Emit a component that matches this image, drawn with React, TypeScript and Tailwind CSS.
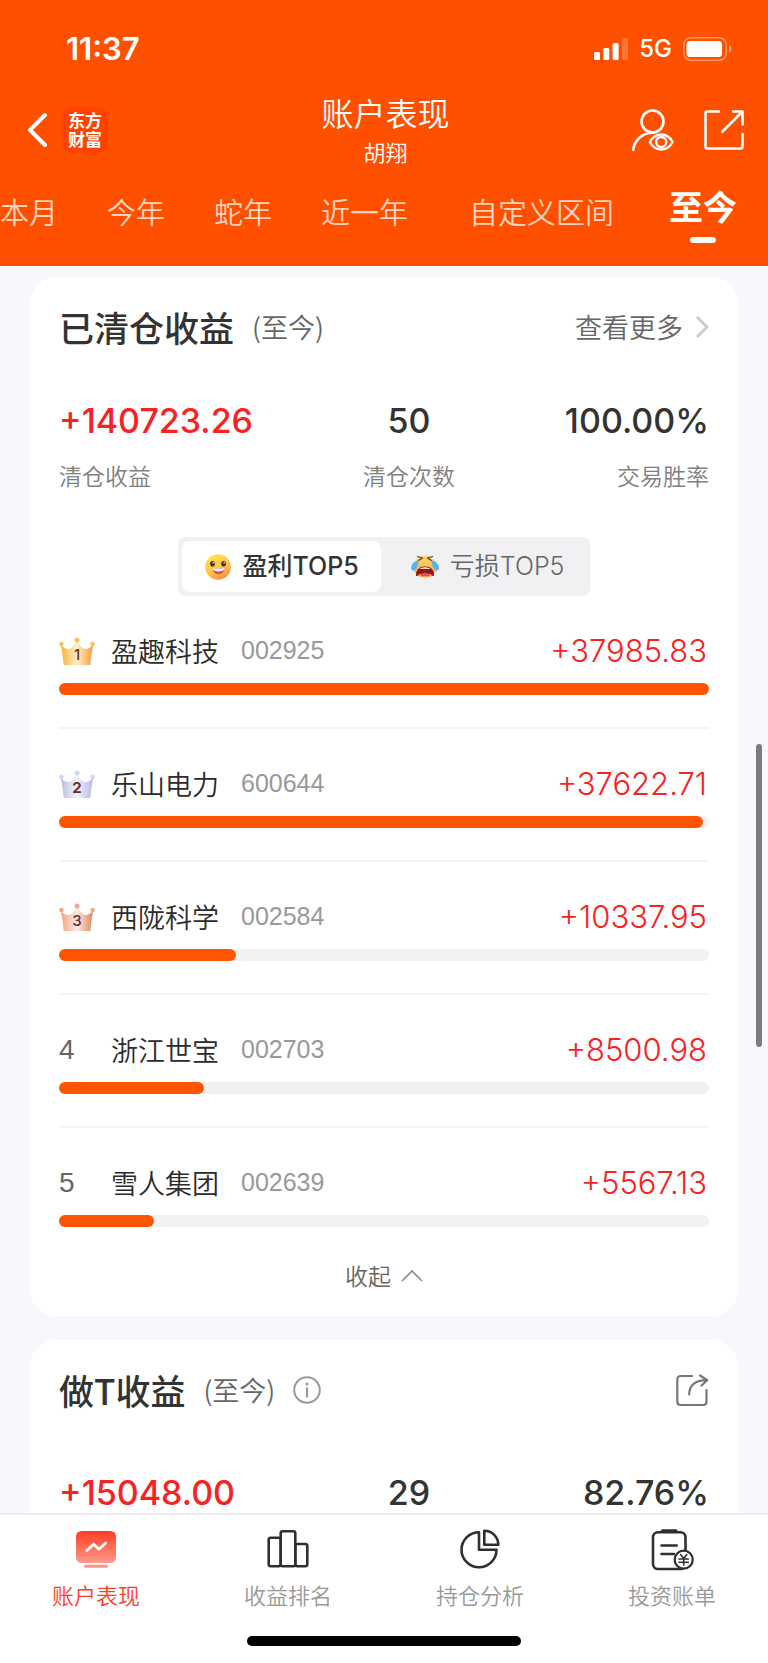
import { useState } from "react";

interface Stock {
  name: string;
  code: string;
  amount: number;
}

const stocks: Stock[] = [
  { name: "盈趣科技", code: "002925", amount: 37985.83 },
  { name: "乐山电力", code: "600644", amount: 37622.71 },
  { name: "西陇科学", code: "002584", amount: 10337.95 },
  { name: "浙江世宝", code: "002703", amount: 8500.98 },
  { name: "雪人集团", code: "002639", amount: 5567.13 },
];

const crowns = [
  { id: "gold", edge: "#f7b035", mid: "#fff0c4", end: "#f39a3c", ball: "#f8c552", weight: 500 },
  { id: "silver", edge: "#b9bde0", mid: "#f3f4fd", end: "#b4b6ea", ball: "#d3d6f5", weight: 700 },
  { id: "bronze", edge: "#f3a283", mid: "#fdeae0", end: "#e2825f", ball: "#f3a88c", weight: 500 },
];

function Crown({ rank }: { rank: number }) {
  const c = crowns[rank - 1];
  return (
    <svg width="36" height="30" viewBox="0 0 36 30" role="img" aria-label={`第${rank}名`}>
      <defs>
        <linearGradient id={c.id} x1="0" x2="1" y1="0" y2="0">
          <stop offset="0" stopColor={c.edge} />
          <stop offset="0.5" stopColor={c.mid} />
          <stop offset="1" stopColor={c.end} />
        </linearGradient>
      </defs>
      <path d="M1.8 9 Q7.500 14.500 11.500 12.500 Q15.500 10 18 4 Q20.500 10 24.500 12.500 Q28.500 14.500 34.200 9 Q32 19 31.300 29 H4.700 Q4 19 1.800 9 Z" fill={`url(#${c.id})`} />
      <circle cx="2.400" cy="8" r="2.300" fill={c.ball} />
      <circle cx="18" cy="4" r="2.500" fill={c.ball} />
      <circle cx="33.600" cy="8" r="2.300" fill={c.ball} />
      <text x="18" y="24" textAnchor="middle" fontFamily="Inter" fontSize="15" fontWeight={c.weight} fill="#6b2c1c">{rank}</text>
    </svg>
  );
}

function HappyFace() {
  return (
    <svg width="28" height="28" viewBox="0 0 28 28" aria-hidden="true">
      <defs>
        <linearGradient id="happy" x1="0.2" x2="0.7" y1="0" y2="1">
          <stop offset="0" stopColor="#ffe64d" />
          <stop offset="0.6" stopColor="#ffc24a" />
          <stop offset="1" stopColor="#f98a4b" />
        </linearGradient>
      </defs>
      <circle cx="14" cy="14" r="12.800" fill="url(#happy)" />
      <ellipse cx="8.500" cy="10.800" rx="2.300" ry="2.800" fill="#4a2a2c" />
      <ellipse cx="19.600" cy="10.800" rx="2.300" ry="2.800" fill="#4a2a2c" />
      <circle cx="9.200" cy="9.800" r="0.800" fill="#fff" />
      <circle cx="20.200" cy="9.800" r="0.800" fill="#fff" />
      <path d="M8.500 15 Q14.500 16.200 20.500 15 Q20 21 14.500 21 Q9 21 8.500 15 Z" fill="#e2453c" />
      <path d="M8.500 15 Q14.500 16.200 20.500 15 Q20.300 18.500 14.500 18.500 Q8.800 18.500 8.500 15 Z" fill="#fff" />
    </svg>
  );
}

function CryingFace() {
  return (
    <svg width="28" height="28" viewBox="0 0 28 28" aria-hidden="true">
      <defs>
        <linearGradient id="crying" x1="0" x2="0" y1="0" y2="1">
          <stop offset="0" stopColor="#ffd873" />
          <stop offset="1" stopColor="#f6a53c" />
        </linearGradient>
      </defs>
      <path d="M14 2.500 C21 2.500 25 8 25 14.500 C25 21.500 20 24.500 14 24.500 C8 24.500 3 21.500 3 14.500 C3 8 7 2.500 14 2.500 Z" fill="url(#crying)" />
      <path d="M6.500 3.500 L11.500 5 L7.500 7.500 M21.500 3.500 L16.500 5 L20.500 7.500" fill="none" stroke="#5b4136" strokeWidth="1.300" strokeLinecap="round" strokeLinejoin="round" />
      <path d="M5 23 Q4.500 13.500 14 13.500 Q23.500 13.500 23 23 Q21 23.500 19.500 21 H8.500 Q7 23.500 5 23 Z" fill="#8e1420" />
      <path d="M8 16 Q14 12.500 20 16 Q14 15.500 8 16 Z" fill="#fff" />
      <path d="M8.500 22.500 Q14 16.500 19.500 22.500 Q14 24 8.500 22.500 Z" fill="#ee4a4a" />
      <path d="M7.500 7.500 Q7 14 4 17 Q1 19 0 15 Q1 8 7.500 7.500 Z" fill="#4fb4f7" />
      <path d="M20.500 7.500 Q21 14 24 17 Q27 19 28 15 Q27 8 20.500 7.500 Z" fill="#4fb4f7" />
    </svg>
  );
}

function StatusBar() {
  return (
    <div className="flex h-[94px] items-center justify-between pt-1 pr-9 pl-[66px] font-['Inter']">
      <span className="text-[31px] font-semibold">11:37</span>
      <div className="flex items-center gap-[11px]">
        <svg width="34" height="23" viewBox="0 0 34 23" fill="#fff" aria-hidden="true">
          <rect x="0" y="14" width="6" height="8" rx="1.500" />
          <rect x="9.300" y="10" width="6" height="12" rx="1.500" />
          <rect x="18.600" y="5" width="6" height="17" rx="1.500" />
          <rect x="28" y="0" width="6" height="22" rx="1.500" opacity="0.200" />
        </svg>
        <span className="text-[24px] font-medium">5G</span>
        <svg width="49" height="24" viewBox="0 0 49 24" aria-hidden="true">
          <rect x="0.800" y="0.800" width="42.500" height="22.400" rx="7" fill="none" stroke="#fff" strokeOpacity="0.400" strokeWidth="1.600" />
          <rect x="3.500" y="4" width="35.500" height="16" rx="3.500" fill="#fff" />
          <path d="M46 8 Q48.700 9.500 48.700 12 Q48.700 14.500 46 16 Z" fill="#fff" fillOpacity="0.450" />
        </svg>
      </div>
    </div>
  );
}

function TitleBar() {
  return (
    <div className="flex h-[72px] items-center pr-6 pl-[27px]">
      <div className="flex flex-1 items-center gap-[15px]">
        <button aria-label="返回">
          <svg width="20" height="36" viewBox="0 0 20 36" fill="none" stroke="#fff" strokeWidth="4" strokeLinecap="round" strokeLinejoin="round">
            <path d="M18 3 L3 18 L18 33" />
          </svg>
        </button>
        <span className="size-[46px] rounded-[10px] bg-[#ff4200] px-1.5 py-[3px] text-[17px] leading-[19px] font-bold">东方财富</span>
      </div>
      <div className="flex flex-col items-center gap-[7px] pb-1">
        <h1 className="text-[32px] leading-[38px] font-[350]">账户表现</h1>
        <span className="text-[22px] leading-[26px] font-[350]">胡翔</span>
      </div>
      <div className="flex flex-1 items-center justify-end gap-[29px]">
        <button aria-label="查看账户">
          <svg width="44" height="44" viewBox="0 0 44 44" fill="none" stroke="#fff" strokeWidth="2.600" strokeLinecap="round">
            <circle cx="21.500" cy="13.500" r="11" />
            <path d="M2.200 42 C3.500 32 11 25 21.500 24.700" />
            <path d="M18.800 34 Q23 26.500 30.200 26.500 Q37.500 26.500 41.600 34 Q37.500 41.500 30.200 41.500 Q23 41.500 18.800 34 Z" strokeWidth="2.400" />
            <circle cx="30.200" cy="34" r="5" strokeWidth="2.400" />
          </svg>
        </button>
        <button aria-label="分享">
          <svg width="40" height="40" viewBox="0 0 40 40" fill="none" stroke="#fff" strokeWidth="2.600" strokeLinejoin="round">
            <path d="M16 1.500 H3.500 Q1.500 1.500 1.500 3.500 V36.500 Q1.500 38.500 3.500 38.500 H36.500 Q38.500 38.500 38.500 36.500 V23" />
            <path d="M28 1.500 H38.500 V15.500 M38 2 L17.500 22.500" />
          </svg>
        </button>
      </div>
    </div>
  );
}

function PeriodTabs() {
  return (
    <div className="flex h-[100px] items-start gap-[49px] overflow-hidden pt-5 text-[29px] leading-[50px] font-[350] whitespace-nowrap text-white/75">
      <button>本月</button>
      <button>今年</button>
      <button>蛇年</button>
      <button>近一年</button>
      <button className="ml-3">自定义区间</button>
      <button aria-current="true" className="ml-1.5 flex flex-col items-center gap-[11px] text-[34px] leading-10 font-bold text-white">
        至今
        <span className="h-1.5 w-[26px] rounded-full bg-white" />
      </button>
    </div>
  );
}

function Stat({ value, label, align, red }: { value: string; label?: string; align: string; red?: boolean }) {
  return (
    <div className={`flex flex-col gap-5 ${align}`}>
      <span className={`font-['Inter'] text-[34px] leading-10 font-medium ${red ? "text-[#f72323]" : "text-[#333]"}`}>{value}</span>
      {label && <span className="text-[23px] leading-7 font-[350] text-[#808080]">{label}</span>}
    </div>
  );
}

function StockRow({ stock, rank }: { stock: Stock; rank: number }) {
  return (
    <li className="border-b-2 border-[#f4f4f6] pt-[35px] pb-8 last:border-b-0 last:pb-0">
      <div className="flex h-10 items-center">
        <span className="w-[52px] font-['Liberation_Sans'] text-[28px] text-[#666]">{rank <= 3 ? <Crown rank={rank} /> : rank}</span>
        <span className="text-[27px] leading-10 font-[350] text-[#2b2b2b]">{stock.name}</span>
        <span className="ml-[22px] font-['Liberation_Sans'] text-[25px] text-[#999]">{stock.code}</span>
        <span className="ml-auto pr-0.5 font-['Inter'] text-[31px] font-light text-[#f72323]">+{stock.amount.toFixed(2)}</span>
      </div>
      <div className="mt-3 h-3 rounded-full bg-[#f1f1f4]">
        <div className="h-full rounded-full bg-[#ff5500]" style={{ width: `${(stock.amount / stocks[0].amount) * 100}%` }} />
      </div>
    </li>
  );
}

function ClearedCard() {
  const [tab, setTab] = useState("profit");
  return (
    <section className="rounded-[26px] bg-white px-[29px] pt-[30px] pb-6">
      <div className="flex h-10 items-center">
        <h2 className="text-[35px] font-medium text-[#333]">已清仓收益</h2>
        <span className="ml-[18px] text-[27px] font-[350] text-[#666]">(至今)</span>
        <a href="#more" className="ml-auto flex items-center gap-3 text-[27px] font-[350] text-[#666]">
          查看更多
          <svg width="14" height="24" viewBox="0 0 14 24" fill="none" stroke="#ccc" strokeWidth="3" aria-hidden="true">
            <path d="M2 2 L12 12 L2 22" />
          </svg>
        </a>
      </div>
      <div className="mt-[54px] flex justify-between">
        <Stat value="+140723.26" label="清仓收益" align="items-start" red />
        <Stat value="50" label="清仓次数" align="items-center" />
        <Stat value="100.00%" label="交易胜率" align="items-end" />
      </div>
      <div className="mt-12 flex justify-center">
        <div className="flex h-[59px] gap-2 rounded-lg bg-[#f1f1f4] p-1 font-['Inter','Noto_Sans_CJK_SC',sans-serif] text-[25px]">
          <button onClick={() => setTab("profit")} className={`flex items-center gap-[11px] rounded-lg px-[22px] ${tab === "profit" ? "bg-white font-medium text-[#333]" : "font-[350] text-[#666]"}`}>
            <HappyFace />盈利TOP5
          </button>
          <button onClick={() => setTab("loss")} className={`flex items-center gap-[11px] rounded-lg px-[22px] ${tab === "loss" ? "bg-white font-medium text-[#333]" : "font-[350] text-[#666]"}`}>
            <CryingFace />亏损TOP5
          </button>
        </div>
      </div>
      <ul>
        {stocks.map((s, i) => <StockRow key={s.code} stock={s} rank={i + 1} />)}
      </ul>
      <button className="mx-auto mt-[31px] flex h-[34px] items-center gap-2.5 text-[23px] font-[350] text-[#666]">
        收起
        <svg width="22" height="13" viewBox="0 0 22 13" fill="none" stroke="#888" strokeWidth="1.600" aria-hidden="true">
          <path d="M1 12 L11 2 L21 12" />
        </svg>
      </button>
    </section>
  );
}

function DayTradeCard() {
  return (
    <section className="rounded-[26px] bg-white px-[29px] pt-[30px] pb-6">
      <div className="flex h-10 items-center">
        <h2 className="text-[35px] font-medium text-[#333]">做T收益</h2>
        <span className="ml-[18px] text-[27px] font-[350] text-[#666]">(至今)</span>
        <button aria-label="说明" className="ml-[18px]">
          <svg width="28" height="28" viewBox="0 0 28 28" fill="none" stroke="#999" strokeWidth="2">
            <circle cx="14" cy="14" r="12.800" />
            <path d="M14 11.500 V21.500" strokeWidth="2.200" />
            <circle cx="14" cy="8" r="1.500" fill="#999" stroke="none" />
          </svg>
        </button>
        <button aria-label="分享" className="ml-auto">
          <svg width="34" height="34" viewBox="0 0 34 34" fill="none" stroke="#777" strokeWidth="2.200" strokeLinecap="round" strokeLinejoin="round">
            <path d="M17 3 H6 Q2.300 3 2.300 6.500 V28.500 Q2.300 32 6 32 H28 Q31.500 32 31.500 28.500 V17" />
            <path d="M14.200 21.500 C14.200 12 20 7.200 32 7.200 M25 2.500 L32.200 7.200 L26.500 12.500" />
          </svg>
        </button>
      </div>
      <div className="mt-[63px] flex justify-between">
        <Stat value="+15048.00" align="items-start" red />
        <Stat value="29" align="items-center" />
        <Stat value="82.76%" align="items-end" />
      </div>
    </section>
  );
}

const navItems = [
  {
    label: "账户表现",
    icon: (
      <>
        <defs>
          <linearGradient id="screen" x1="0" x2="0" y1="0" y2="1">
            <stop offset="0" stopColor="#ff3d22" />
            <stop offset="1" stopColor="#ff9b8c" />
          </linearGradient>
        </defs>
        <rect x="2" y="3" width="40" height="32" rx="5.500" fill="url(#screen)" stroke="none" />
        <path d="M13 22.500 L19.700 16.200 L25 21.300 L31.500 15.300" stroke="#fff" strokeWidth="2.800" />
        <rect x="10" y="36.700" width="24" height="3" rx="1.500" fill="#ff9384" stroke="none" />
      </>
    ),
  },
  {
    label: "收益排名",
    icon: (
      <>
        <rect x="2.700" y="9.700" width="12" height="28.600" rx="2" />
        <rect x="14.700" y="3.200" width="14.600" height="35.100" rx="2" />
        <rect x="29.300" y="16" width="12" height="22.300" rx="2" />
      </>
    ),
  },
  {
    label: "持仓分析",
    icon: (
      <>
        <path d="M21 4.200 A17.500 17.500 0 1 0 38.500 21.700 H21 Z" />
        <path d="M26.300 2.800 A14 14 0 0 1 40.300 16.800 H26.300 Z" />
      </>
    ),
  },
  {
    label: "投资账单",
    icon: (
      <>
        <rect x="3" y="4.200" width="32.500" height="36.800" rx="5" />
        <path d="M12.500 2.900 H26" strokeWidth="3.200" />
        <path d="M11.500 17.500 H26.700 M11.500 26 H24" />
        <circle cx="33.700" cy="31.700" r="9" fill="#fff" strokeWidth="2.200" />
        <path d="M30.700 26.700 L33.700 30.500 L36.700 26.700 M29 31 H38.400 M29 34.200 H38.400 M33.700 30.500 V37" strokeWidth="1.600" />
      </>
    ),
  },
];

function BottomNav() {
  return (
    <nav className="border-t-2 border-[#eee] bg-white pt-[13px] pb-[17px]">
      <div className="grid grid-cols-4">
        {navItems.map((item, i) => (
          <button key={item.label} className={`flex flex-col items-center gap-2 text-[22px] leading-7 font-[350] ${i === 0 ? "text-[#ff3d22]" : "text-[#999]"}`}>
            <svg width="44" height="44" viewBox="0 0 44 44" fill="none" stroke="#2f2f2f" strokeWidth="2.600" strokeLinecap="round" strokeLinejoin="round" aria-hidden="true">
              {item.icon}
            </svg>
            {item.label}
          </button>
        ))}
      </div>
      <div className="mx-auto mt-7 h-2.5 w-[274px] rounded-full bg-black" />
    </nav>
  );
}

export default function App() {
  return (
    <div className="flex h-screen flex-col bg-[#f6f8fb] font-['Noto_Sans_CJK_SC',sans-serif]">
      <header className="shrink-0 bg-[#ff5000] text-white">
        <StatusBar />
        <TitleBar />
        <PeriodTabs />
      </header>
      <div className="relative min-h-0 flex-1 overflow-hidden">
        <main className="flex flex-col gap-6 px-[30px] pt-[11px]">
          <ClearedCard />
          <DayTradeCard />
        </main>
        <div className="absolute top-[478px] right-1.5 h-[303px] w-1.5 rounded-full bg-[#7b7c7e]" />
      </div>
      <BottomNav />
    </div>
  );
}
